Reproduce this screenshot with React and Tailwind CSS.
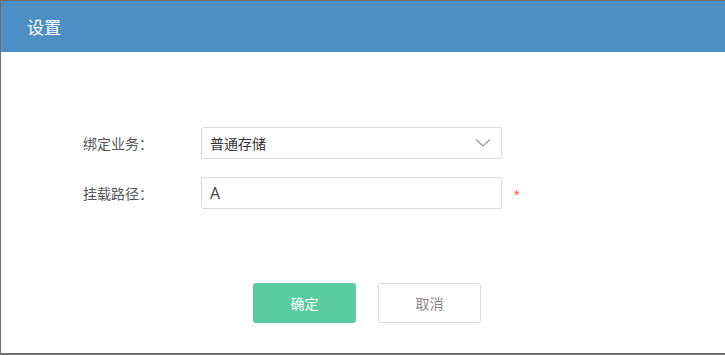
import React from "react";

const App = () => {
  return (
    <div
      className="w-[725px] h-[355px] bg-white border-t border-l border-b-2 border-[#707070] overflow-hidden"
      style={{ fontFamily: '"Noto Sans CJK SC", "Noto Sans", sans-serif' }}
    >
      <div className="h-[51px] bg-[#4c8fc4] flex items-center pl-[26px]">
        <p className="text-white text-[17px] mt-[1px]">设置</p>
      </div>
      <div className="pt-[75px] pl-[82px]">
        <div className="flex items-center">
          <span className="w-[118px] text-[14px] text-[#555]">绑定业务：</span>
          <div className="w-[301px] h-[32px] border border-[#dcdcdc] rounded-[2px] flex items-center justify-between px-[8px]">
            <span className="text-[14px] text-[#333]">普通存储</span>
            <svg width="16" height="10" viewBox="0 0 16 10" className="mr-[2px]">
              <path d="M1 1.5 L8 8 L15 1.5" fill="none" stroke="#999" strokeWidth="1.2" />
            </svg>
          </div>
        </div>
        <div className="flex items-center mt-[18px]">
          <span className="w-[118px] text-[14px] text-[#555]">挂载路径：</span>
          <div className="w-[301px] h-[32px] border border-[#dcdcdc] rounded-[2px] flex items-center px-[8px]">
            <span className="text-[16px] text-[#444]" style={{ fontFamily: '"Open Sans", sans-serif' }}>A</span>
          </div>
          <span className="ml-[11px] text-[#f07070] text-[16px] mt-[6px]">*</span>
        </div>
        <div className="flex mt-[74px] ml-[170px] gap-[22px]">
          <button className="w-[103px] h-[40px] rounded-[3px] bg-[#5acba0] text-white text-[14px]">确定</button>
          <button className="w-[103px] h-[40px] rounded-[3px] border border-[#dddddd] bg-white text-[#888] text-[14px]">取消</button>
        </div>
      </div>
    </div>
  );
};

export default App;
